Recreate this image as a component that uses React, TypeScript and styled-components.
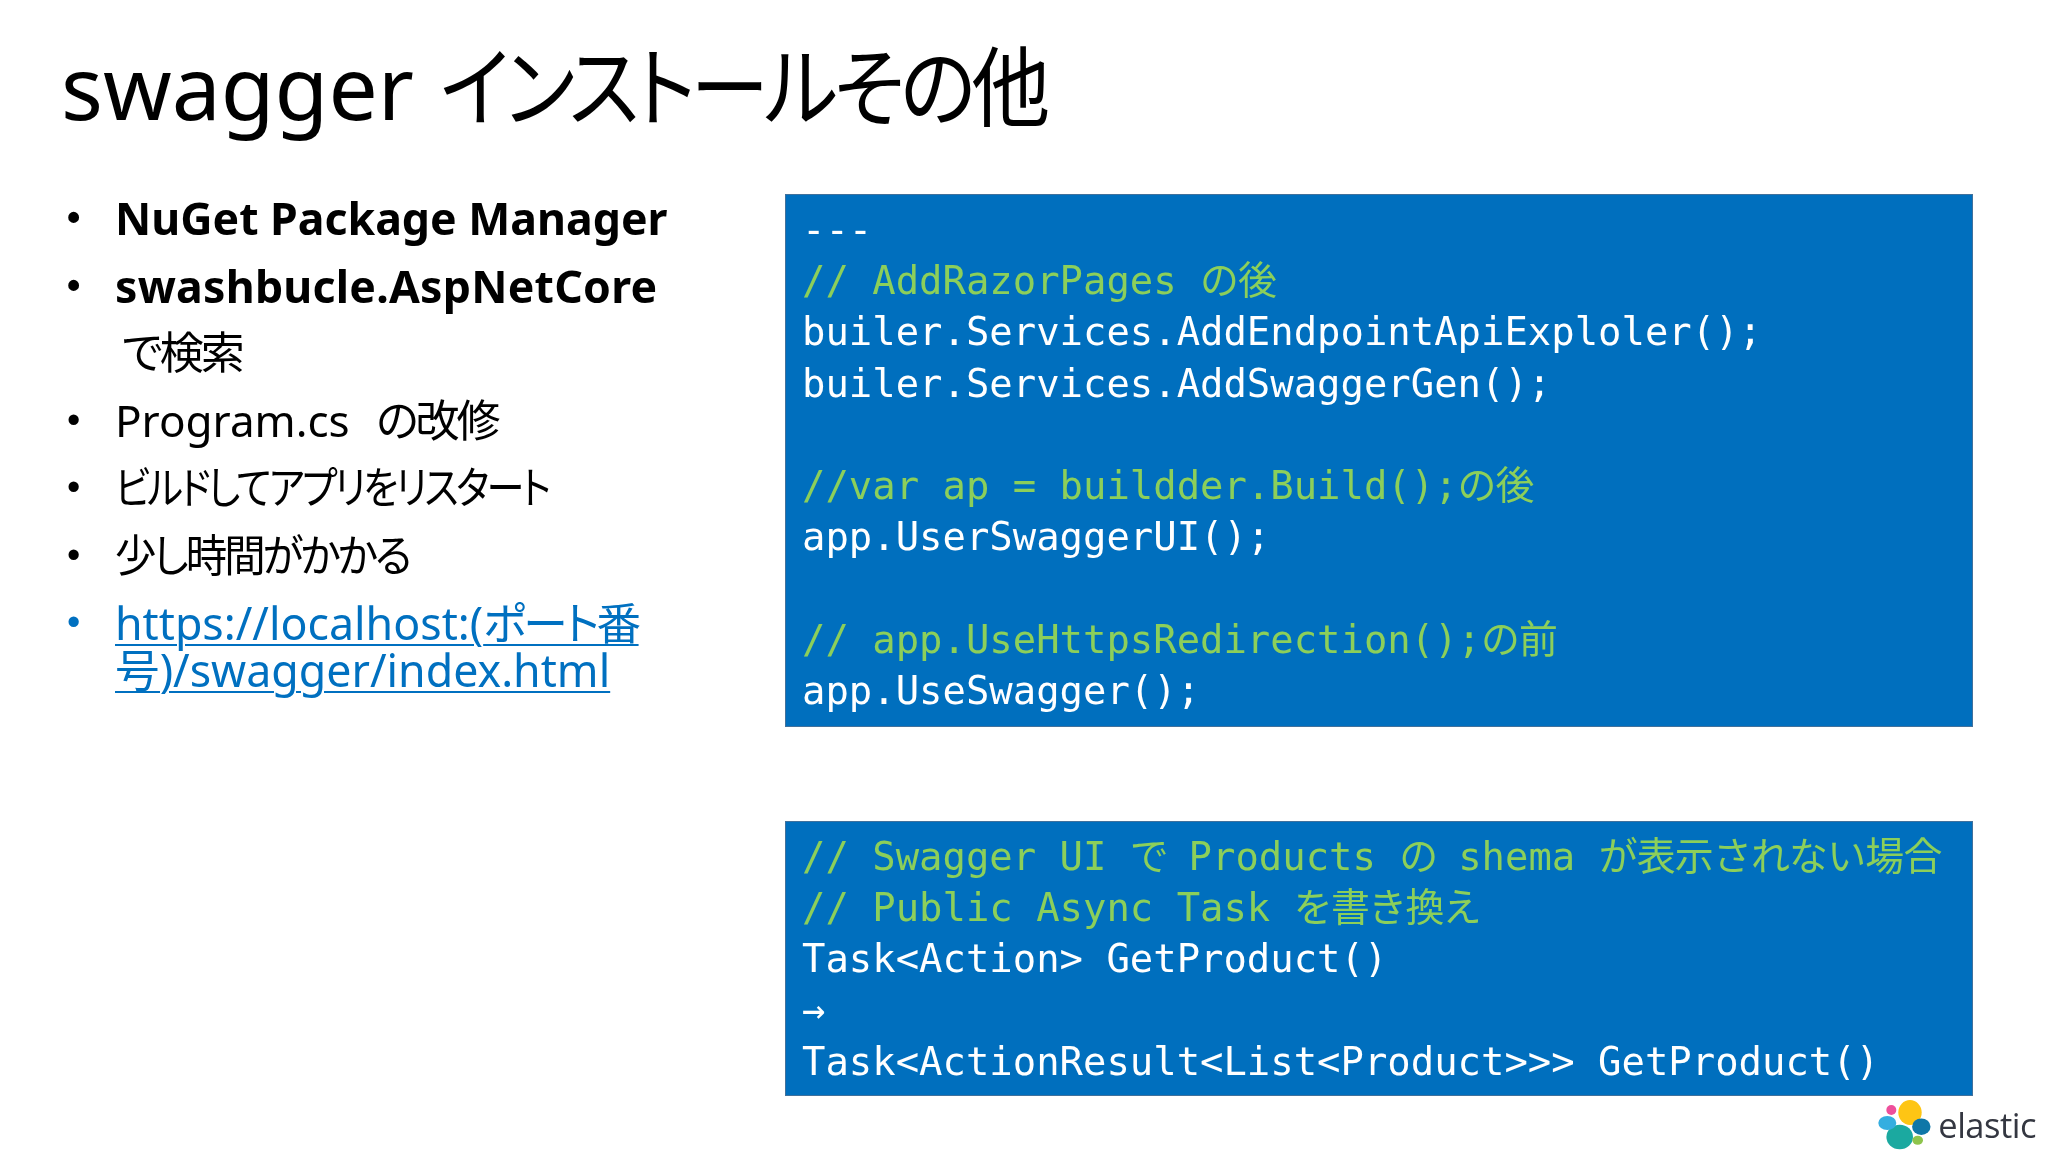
import React from "react";
import styled, { createGlobalStyle } from "styled-components";

const CJK = `"Noto Sans CJK JP"`;

const Global = createGlobalStyle`
  html, body { margin: 0; padding: 0; background: #fff; }
`;

const Slide = styled.div`
  width: 2048px;
  height: 1152px;
  overflow: hidden;
  display: flex;
  flex-direction: column;
  background: #fff;
  font-family: "Noto Sans", ${CJK}, sans-serif;
  font-feature-settings: "palt";
  color: #000;
  filter: blur(0.4px);
`;

const Title = styled.h1`
  margin: 0;
  height: 184px;
  box-sizing: border-box;
  padding: 26px 0 0 61px;
  font-size: 87.5px;
  line-height: 120px;
  font-weight: 400;
  white-space: nowrap;
`;

const Squeezed = styled.span<{ $x: number; $track: number; $indent?: number }>`
  display: inline-block;
  transform: scaleX(${(p) => p.$x});
  transform-origin: left center;
  letter-spacing: ${(p) => p.$track}px;
  margin-left: ${(p) => p.$indent ?? 0}px;
`;

const Content = styled.div`
  display: grid;
  grid-template-columns: 719px 1188px;
  padding-left: 66px;
`;

const List = styled.ul`
  margin: 0;
  padding: 0;
  list-style: none;
  font-size: 44px;
  line-height: 47px;
`;

const Item = styled.li<{ $link?: boolean; $bold?: boolean }>`
  display: grid;
  grid-template-columns: 49px 1fr;
  padding: 10.25px 0;
  font-size: ${(p) => (p.$bold ? 44.6 : p.$link ? 44.7 : 44)}px;
  font-weight: ${(p) => (p.$bold ? 700 : 400)};
  color: ${(p) => (p.$link ? "#0070c0" : "#000")};
  white-space: nowrap;
`;

const Bullet = styled.span`
  font-family: "Liberation Sans", sans-serif;
  font-size: 38px;
  padding-left: 1px;
`;

const Ja = styled.span<{ $track: number; $indent?: number }>`
  letter-spacing: ${(p) => p.$track}px;
  margin-left: ${(p) => p.$indent ?? 0}px;
`;

const Link = styled.a`
  color: inherit;
  text-decoration: underline;
  text-decoration-thickness: 2px;
  text-underline-offset: 4px;
`;

const Codes = styled.div`
  display: flex;
  flex-direction: column;
  gap: 94px;
  margin-top: 10px;
`;

const CodeBox = styled.div<{ $bottom: number }>`
  box-sizing: border-box;
  padding: 9px 16px ${(p) => p.$bottom}px;
  background: #006fbe;
  border: 1px solid #41719c;
  font-family: "DejaVu Sans Mono", ${CJK}, monospace;
  font-size: 38.9px;
  line-height: 51.2px;
  color: #fff;
  white-space: pre;
  font-feature-settings: normal;
`;

const CodeLine = styled.div<{ $comment?: boolean }>`
  height: 51.2px;
  color: ${(p) => (p.$comment ? "#8ccf5a" : "#fff")};
`;

const CodeJa = styled.span<{ $track: number }>`
  letter-spacing: ${(p) => p.$track}px;
`;

const Footer = styled.div`
  display: flex;
  justify-content: flex-end;
  align-items: center;
  gap: 5px;
  padding: 4px 12px 0 0;
`;

const Wordmark = styled.span`
  font-family: "Open Sans", sans-serif;
  font-size: 34.5px;
  line-height: 50px;
  letter-spacing: -0.5px;
  color: #343741;
`;

const ElasticLogo = () => (
  <svg width="56" height="50" viewBox="0 0 56 50" aria-hidden="true">
    <ellipse cx="33" cy="12.5" rx="11.7" ry="12.5" fill="#fec514" />
    <ellipse cx="22.7" cy="37" rx="13.3" ry="12.2" fill="#1ba9a0" />
    <ellipse cx="10.3" cy="23" rx="9" ry="7" fill="#35aee0" />
    <ellipse cx="44.3" cy="26.7" rx="9.2" ry="8.3" fill="#0f77a8" />
    <ellipse cx="14.3" cy="10" rx="5" ry="5" fill="#ee4f9b" />
    <ellipse cx="40.7" cy="40.3" rx="5.3" ry="4.5" fill="#8ec44c" />
  </svg>
);

export default function App() {
  return (
    <Slide>
      <Global />
      <Title>
        swagger <Squeezed $x={0.9} $track={-5} $indent={3}>インストールその他</Squeezed>
      </Title>
      <Content>
        <List>
          <Item $bold><Bullet>•</Bullet><span>NuGet Package Manager</span></Item>
          <Item $bold><Bullet>•</Bullet><Ja $track={0.25}>swashbucle.AspNetCore</Ja></Item>
          <Item><span /><Ja $track={-3} $indent={7}>で検索</Ja></Item>
          <Item><Bullet>•</Bullet><span>Program.cs <Ja $track={-3} $indent={15}>の改修</Ja></span></Item>
          <Item><Bullet>•</Bullet><span><Squeezed $x={0.867} $track={-3}>ビルドしてアプリをリスタート</Squeezed></span></Item>
          <Item><Bullet>•</Bullet><span><Squeezed $x={0.94} $track={-3}>少し時間がかかる</Squeezed></span></Item>
          <Item $link>
            <Bullet>•</Bullet>
            <span>
              <Link href="#">https://localhost:(<Ja $track={-2.7}>ポート番</Ja><br />号)/swagger/index.html</Link>
            </span>
          </Item>
        </List>
        <Codes>
          <CodeBox $bottom={10}>
            <CodeLine>---</CodeLine>
            <CodeLine $comment>// AddRazorPages <CodeJa $track={-1}>の後</CodeJa></CodeLine>
            <CodeLine>builer.Services.AddEndpointApiExploler();</CodeLine>
            <CodeLine>builer.Services.AddSwaggerGen();</CodeLine>
            <CodeLine />
            <CodeLine $comment>//var ap = buildder.Build();<CodeJa $track={-1}>の後</CodeJa></CodeLine>
            <CodeLine>app.UserSwaggerUI();</CodeLine>
            <CodeLine />
            <CodeLine $comment>// app.UseHttpsRedirection();<CodeJa $track={-1}>の前</CodeJa></CodeLine>
            <CodeLine>app.UseSwagger();</CodeLine>
          </CodeBox>
          <CodeBox $bottom={8}>
            <CodeLine $comment>// Swagger UI <CodeJa $track={-3.5}>で</CodeJa> Products <CodeJa $track={-3.5}>の</CodeJa> shema <CodeJa $track={-0.8}>が表示されない場合</CodeJa></CodeLine>
            <CodeLine $comment>// Public Async Task <CodeJa $track={-1.6}>を書き換え</CodeJa></CodeLine>
            <CodeLine>Task&lt;Action&gt; GetProduct()</CodeLine>
            <CodeLine>→</CodeLine>
            <CodeLine>Task&lt;ActionResult&lt;List&lt;Product&gt;&gt;&gt; GetProduct()</CodeLine>
          </CodeBox>
        </Codes>
      </Content>
      <Footer>
        <ElasticLogo />
        <Wordmark>elastic</Wordmark>
      </Footer>
    </Slide>
  );
}
